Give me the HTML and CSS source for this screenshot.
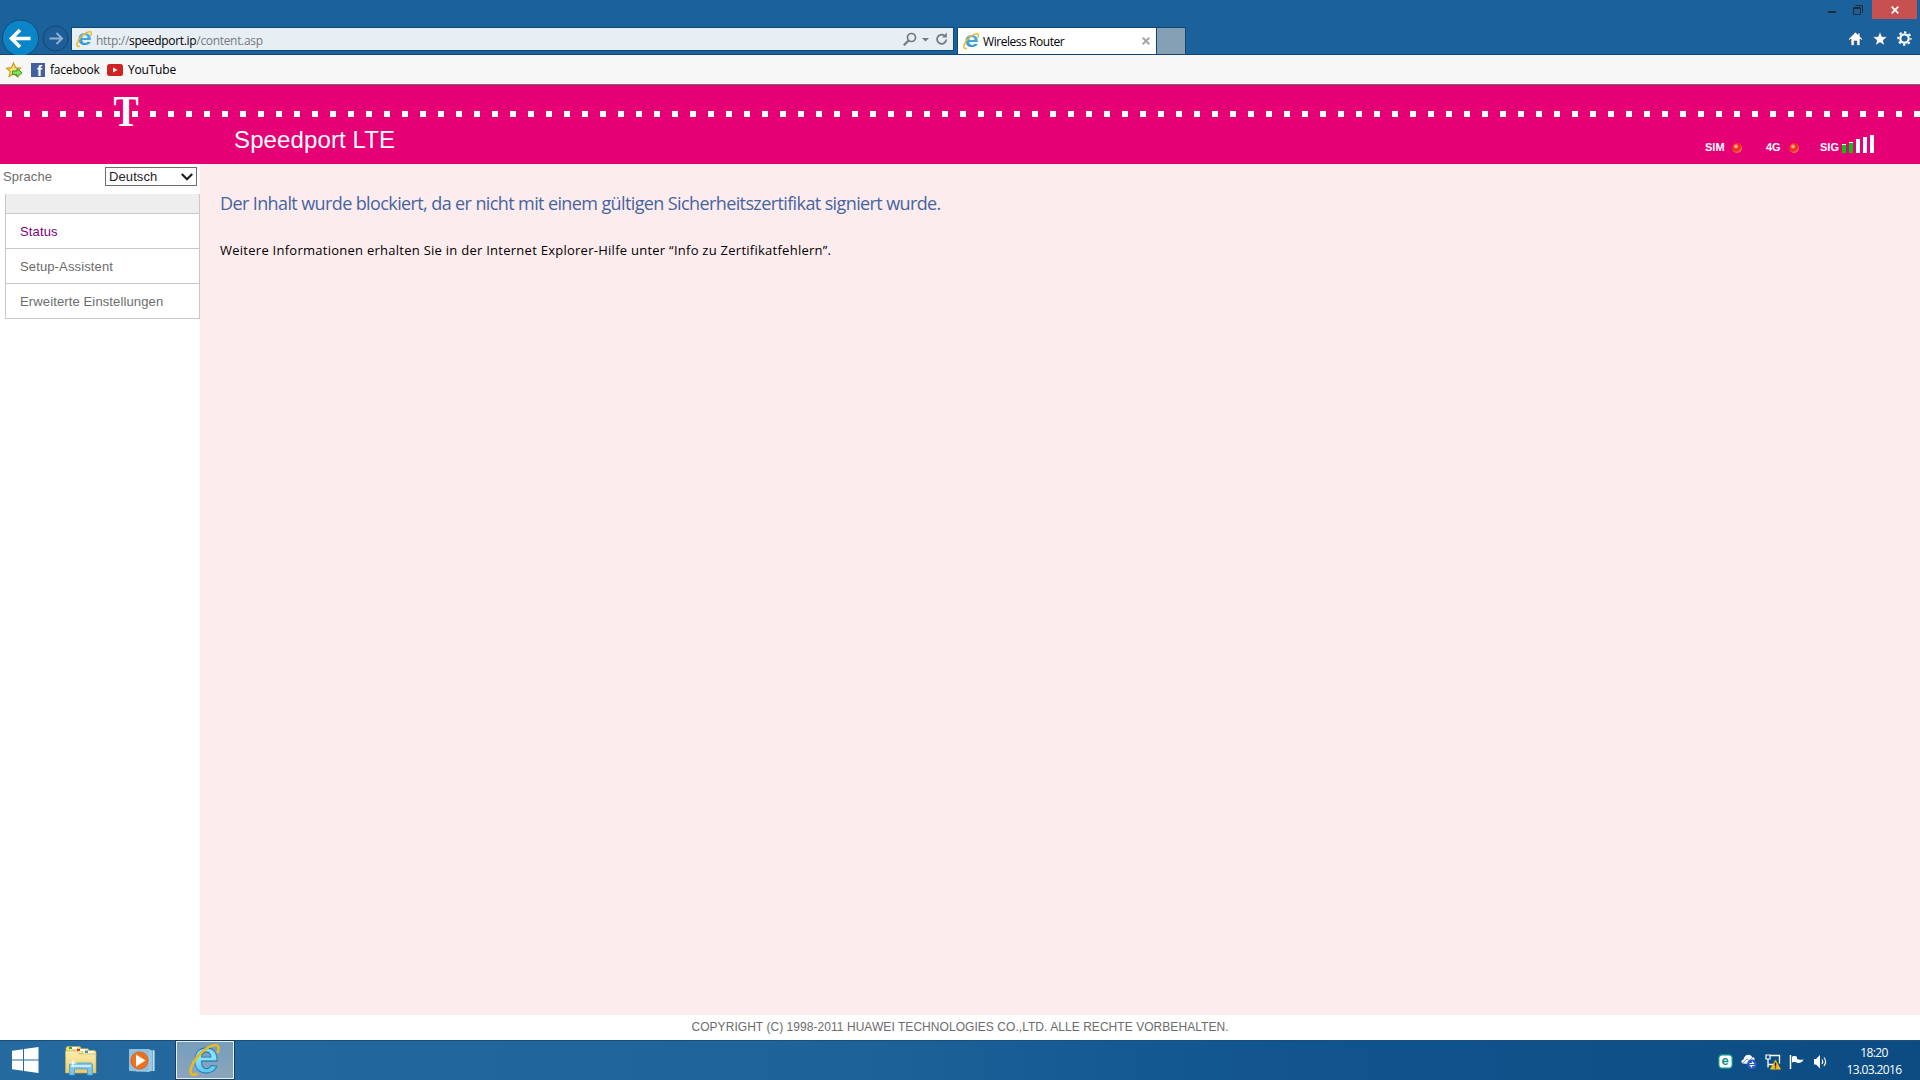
FILE: index.html
```html
<!DOCTYPE html>
<html lang="de">
<head>
    <meta charset="UTF-8">
    <title>Wireless Router</title>
    <link rel="stylesheet" href="styles.css">
</head>
<body>
    <svg class="defs" width="0" height="0">
        <defs>
            <linearGradient id="ieBlue" x1="0" y1="0" x2="0" y2="1">
                <stop offset="0" stop-color="#5fc0ee"/>
                <stop offset="1" stop-color="#2b8fd3"/>
            </linearGradient>
            <linearGradient id="ieCyan" x1="0" y1="0" x2="0" y2="1">
                <stop offset="0" stop-color="#4fc4f0"/>
                <stop offset=".5" stop-color="#8ee6fc"/>
                <stop offset="1" stop-color="#35b3ea"/>
            </linearGradient>
            <linearGradient id="folder" x1="0" y1="0" x2="0" y2="1">
                <stop offset="0" stop-color="#fbeeb0"/>
                <stop offset="1" stop-color="#e9cd6c"/>
            </linearGradient>
            <symbol id="ie" viewBox="0 0 16 16" overflow="visible">
                <text x="1.3" y="14.3" class="ie-letter" transform="scale(1.15 1)">e</text>
                <path d="M3.8 15.2C.6 16.3-.2 13.600 2.200 9.600 5 4.800 10.600.4 14 .7c1.700.2 1.700 2 .8 4" fill="none" stroke="#f3b91b" stroke-width="1.5"/>
            </symbol>
        </defs>
    </svg>

    <header class="browser">
        <div class="titlebar">
            <div class="win-btn minimize"><span></span></div>
            <div class="win-btn">
                <svg width="10" height="10" viewBox="0 0 10 10"><path d="M.5 2.500h7v7h-7zM.5 3.500h7M2.500.5h7v7" fill="none" stroke="#222c36"/></svg>
            </div>
            <div class="win-btn close">
                <svg width="8" height="8" viewBox="0 0 8 8"><path d="M.7.7l6.600 6.600M7.300.7L.7 7.300" stroke="#fff" stroke-width="1.700"/></svg>
            </div>
        </div>
        <div class="navbar">
            <svg class="nav-arrows" width="70" height="35" viewBox="0 0 70 35">
                <circle cx="20" cy="19" r="18" fill="#0a86c8" stroke="#144a77"/>
                <path d="M30 19.500H12M19.500 11L11 19.500l8.500 8.500" fill="none" stroke="#fff" stroke-width="3.600"/>
                <circle cx="55" cy="19.500" r="12.500" fill="#1f5f99" stroke="#15466f"/>
                <path d="M49 19.500h12M56 14l5.500 5.500-5.500 5.500" fill="none" stroke="#8fb0cf" stroke-width="2"/>
            </svg>
            <div class="address">
                <svg class="ie-small" width="16" height="16"><use href="#ie"/></svg>
                <span class="url">http://<b>speedport.ip</b>/content.asp</span>
                <svg width="45" height="15" viewBox="0 0 45 15">
                    <circle cx="8.500" cy="5.500" r="4" fill="none" stroke="#75797d" stroke-width="1.700"/>
                    <path d="M5.600 8.500L.8 13.300" stroke="#75797d" stroke-width="2.200"/>
                    <path d="M19 6h7l-3.500 3.500z" fill="#75797d"/>
                    <path d="M41.300 3.500A4.600 4.600 0 1 0 43.200 7.500" fill="none" stroke="#75797d" stroke-width="1.800"/>
                    <path d="M39 5.500h4.800V.6z" fill="#75797d"/>
                </svg>
            </div>
            <div class="tab">
                <svg class="ie-small" width="16" height="16"><use href="#ie"/></svg>
                <span class="tab-title">Wireless Router</span>
                <svg width="8" height="8" viewBox="0 0 8 8"><path d="M.7.7l6.600 6.600M7.300.7L.7 7.300" stroke="#a6a6a6" stroke-width="2"/></svg>
            </div>
            <div class="new-tab"></div>
            <svg class="tools" width="64" height="16" viewBox="0 0 64 16">
                <g fill="#fff" stroke="#1d4468" stroke-width=".6">
                    <path d="M7.500 1L.5 8l1.200 1.200L3 8v6.500h3.200V10h2.600v4.500H12V8l1.300 1.200L14.500 8 12 5.500V2h-2v1.500z"/>
                    <path d="M32 .5l2 5.100 5.500.2-4.300 3.400 1.500 5.300-4.700-3-4.700 3 1.500-5.300-4.300-3.400 5.500-.2z"/>
                </g>
                <circle cx="56.500" cy="7.500" r="4.200" fill="none" stroke="#fff" stroke-width="2.200"/>
                <circle cx="56.500" cy="7.500" r="6.200" fill="none" stroke="#fff" stroke-width="2" stroke-dasharray="2.400 2.470" stroke-dashoffset="1.200"/>
            </svg>
        </div>
    </header>

    <nav class="favorites">
        <svg width="17" height="16" viewBox="0 0 17 16">
            <path d="M7.500 1l2 4.600 5 .5-3.800 3.400 1.100 5-4.300-2.600-4.400 2.600 1.200-5L.6 6.100l4.900-.5z" fill="#fbe27a" stroke="#d09a1c" stroke-width="1.200"/>
            <path d="M6.500 9h4.500V6.600l5 4.200-5 4.200v-2.400H6.500z" fill="#8fdc5a" stroke="#2c9a25"/>
        </svg>
        <svg class="fb" width="14" height="14" viewBox="0 0 14 14">
            <rect width="14" height="14" fill="#4460a0"/>
            <text x="6" y="13" class="fb-letter">f</text>
        </svg>
        <span class="fav-label fav-facebook">facebook</span>
        <svg width="16" height="12" viewBox="0 0 16 12">
            <rect width="16" height="12" rx="2.500" fill="#cf2322"/>
            <path d="M6 3.500v5L10.500 6z" fill="#fff"/>
        </svg>
        <span class="fav-label">YouTube</span>
    </nav>

    <div class="banner">
        <div class="dots"></div>
        <div class="t-logo"><span>T</span></div>
        <h1 class="product">Speedport LTE</h1>
        <div class="signals">
            <span class="sig-label">SIM</span>
            <span class="led"></span>
            <span class="sig-label label-4g">4G</span>
            <span class="led"></span>
            <span class="sig-label label-sig">SIG</span>
            <svg width="32" height="18" viewBox="0 0 32 18" shape-rendering="crispEdges">
                <path d="M0 9h4v9H0zM7 7h4v11H7zM14 4h4v14h-4zM21 2h4v16h-4zM28 0h4v18h-4z" fill="#fff"/>
                <path d="M0 10h4v8H0zM7 8h4v10H7z" fill="#00c80a"/>
            </svg>
        </div>
    </div>

    <main class="page">
        <aside class="sidebar">
            <div class="language">
                <span>Sprache</span>
                <div class="select">
                    <span>Deutsch</span>
                    <svg width="12" height="8" viewBox="0 0 12 8"><path d="M.8 1L6 6.300 11.200 1" fill="none" stroke="#1e1e1e" stroke-width="2.200"/></svg>
                </div>
            </div>
            <ul class="menu">
                <li class="menu-head"></li>
                <li class="active">Status</li>
                <li>Setup-Assistent</li>
                <li>Erweiterte Einstellungen</li>
            </ul>
        </aside>
        <section class="content">
            <h2>Der Inhalt wurde blockiert, da er nicht mit einem gültigen Sicherheitszertifikat signiert wurde.</h2>
            <p>Weitere Informationen erhalten Sie in der Internet Explorer-Hilfe unter “Info zu Zertifikatfehlern”.</p>
        </section>
    </main>

    <footer class="copyright">COPYRIGHT (C) 1998-2011 HUAWEI TECHNOLOGIES CO.,LTD. ALLE RECHTE VORBEHALTEN.</footer>

    <div class="taskbar">
        <svg class="start" width="27" height="26" viewBox="0 0 27 26">
            <path d="M0 3.800L11 2.200v10.300H0zM12 2L26.500 0v12.500H12zM0 13.500h11v10.300L0 22.200zM12 13.500h14.500V26L12 24z" fill="#fff"/>
        </svg>
        <svg class="explorer" width="32" height="30" viewBox="0 0 32 30">
            <path d="M1 2l1-1.500h13l1 1.500v4h-15z" fill="#f2dc8c" stroke="#c9a94d" stroke-width=".6"/>
            <path d="M9 4l1-1.300h13l1 1.300v4H9z" fill="#f6e3a0" stroke="#c9a94d" stroke-width=".6"/>
            <path d="M17 6l1-1.500h12L31 6v4H17z" fill="#f8e9ae" stroke="#c9a94d" stroke-width=".6"/>
            <path d="M6 1h6v2H6zM14 3h6v2h-6zM22 5h6v2h-6z" fill="#fff"/>
            <path d="M4 1h3v2H4z" fill="#14b830"/>
            <path d="M12 3h3v2h-3z" fill="#d53c28"/>
            <path d="M20 5h3v2h-3z" fill="#2c9ae0"/>
            <path d="M.5 5H12l2 3h17v19H.5z" fill="url(#folder)" stroke="#cdae52" stroke-width=".6"/>
            <path d="M4.500 29V19q0-2 2-2h19q2 0 2 2v10h-5v-6h-13v6z" fill="#7fc3e6" stroke="#4a9bc8" stroke-width=".8"/>
            <path d="M6 20h20" stroke="#c9ecfb" stroke-width="2"/>
            <path d="M8 12l.7 4.300 4.300.7-4.300.7L8 22l-.7-4.300L3 17l4.300-.7z" fill="#fff"/>
        </svg>
        <svg class="media" width="27" height="26" viewBox="0 0 27 26">
            <path d="M7 2l19 .5V23l-19 .5z" fill="#78b2d8"/>
            <path d="M22 2v21M24.500 2v21" stroke="#b9dcef"/>
            <path d="M.5 1.500h20v22l-20-1z" fill="#8fc1df" stroke="#b0d5ea" stroke-width=".7"/>
            <circle cx="10.500" cy="12.500" r="8.600" fill="#f1701c" stroke="#d9560c" stroke-width=".8"/>
            <path d="M7 6.500v12l9.500-6z" fill="#fff"/>
        </svg>
        <div class="task-active">
            <svg width="32" height="32" viewBox="0 0 32 32">
                <text x="4" y="29" class="ie-big">e</text>
                <path d="M8.500 29.500C2.500 32.500-.5 29.500 3 21.500 7 12.500 18 1.200 26.500 1.200c4 0 3.500 4.300 2 7.800" fill="none" stroke="#e8ba1c" stroke-width="2.600"/>
            </svg>
        </div>
        <div class="tray">
            <svg width="15" height="15" viewBox="0 0 15 15">
                <rect x=".7" y=".7" width="13.600" height="13.600" rx="3.500" fill="#fff" stroke="#0d8f8c" stroke-width="1.400"/>
                <text x="3.600" y="11" class="eset">e</text>
            </svg>
            <svg width="16" height="16" viewBox="0 0 16 16">
                <path d="M2 9.500C-.5 8.500 0 6 2.500 5.500 3 2.500 5 .8 7.500.8c2 0 3 1 3.500 2.200 2-.2 3 1 2.500 3L9 10z" fill="#f5f8fa"/>
                <path d="M2 9l4-4 2 2 4-4" stroke="#8596a5" stroke-width=".9" fill="none"/>
                <circle cx="11" cy="10.500" r="5" fill="#2358c4"/>
                <path d="M8.500 9.500h4l-1.500-2M13.500 11.500h-4l1.500 2" fill="none" stroke="#fff" stroke-width="1.200"/>
            </svg>
            <svg width="16" height="16" viewBox="0 0 16 16">
                <path d="M5 1.500h9.500v8M3 5v5.500h5M3 10.500v3" fill="none" stroke="#fff" stroke-width="1.300"/>
                <path d="M1 1h4v4H1z" fill="#0e518b" stroke="#fff" stroke-width="1.200"/>
                <path d="M10.500 5.500L16 15.500H5z" fill="#f6be16"/>
                <path d="M10.500 8.500v4M10.500 13.300v1.200" stroke="#222" stroke-width="1.400"/>
            </svg>
            <svg width="16" height="16" viewBox="0 0 16 16">
                <path d="M1.500 1v14" stroke="#fff" stroke-width="1.500"/>
                <path d="M3 2.500c2-1 4-.5 5 .5v2c2 1 4 .7 6.500.5-1 2.500-3 4-6 3.500-1.500-1.200-3-1.200-5.500-.5z" fill="#fff"/>
            </svg>
            <svg width="16" height="16" viewBox="0 0 16 16">
                <path d="M1 5h2l4-4v13.500l-4-4H1z" fill="#fff"/>
                <path d="M9 5.500q1.500 2 0 4.500M11 3.500q3.200 4 0 8.500" fill="none" stroke="#fff" stroke-width="1.200"/>
            </svg>
        </div>
        <div class="clock">
            <span>18:20</span>
            <span>13.03.2016</span>
        </div>
    </div>
</body>
</html>
```

FILE: styles.css
```css
:root {
    --chrome: #1b619c;
    --edge: #134572;
    --magenta: #e50075;
    --grey: #6c6c6c;
    --line: #c8c8c8;
}

* {
    box-sizing: border-box;
}

body {
    margin: 0;
    width: 1920px;
    height: 1080px;
    display: flex;
    flex-direction: column;
    overflow: hidden;
    background: #fff;
    font-family: "Open Sans", "Noto Sans", sans-serif;
    font-size: 12px;
    white-space: nowrap;
}

svg {
    display: block;
    flex: none;
    overflow: visible;
}

.defs {
    position: absolute;
}

.ie-letter {
    font: bold 22px "Liberation Sans", sans-serif;
    fill: url(#ieBlue);
}

/* browser frame */
.browser {
    height: 55px;
    background: var(--chrome);
    border-bottom: 1px solid var(--edge);
}

.titlebar {
    height: 19px;
    display: flex;
    justify-content: flex-end;
    padding-right: 3px;
}

.win-btn {
    width: 26px;
    height: 19px;
    display: flex;
    align-items: center;
    justify-content: center;
}

.minimize {
    width: 27px;
    padding-top: 5px;
}

.minimize span {
    width: 8px;
    height: 2px;
    background: #222c36;
}

.close {
    width: 45px;
    margin-left: 1px;
    background: #c75050;
}

.navbar {
    height: 35px;
    display: flex;
    align-items: flex-start;
}

.nav-arrows {
    width: 71px;
    flex: none;
}

.address {
    width: 883px;
    height: 24px;
    margin-top: 8px;
    padding: 0 5px 0 4px;
    display: flex;
    align-items: center;
    background: #e7eff5;
    border: 1px solid var(--edge);
}

.url {
    flex: 1;
    margin: 2px 0 0 4px;
    color: #76797c;
    letter-spacing: -.32px;
}

.url b {
    color: #000;
    font-weight: 400;
}

.tab {
    width: 200px;
    height: 27px;
    margin: 8px 0 0 3px;
    padding: 0 6px 0 5px;
    display: flex;
    align-items: center;
    background: #fff;
    border: 1px solid var(--edge);
    border-bottom: 0;
}

.tab-title {
    flex: 1;
    margin: 1px 0 0 4px;
    letter-spacing: -.45px;
}

.new-tab {
    width: 29px;
    height: 27px;
    margin-top: 8px;
    background: #859fb5;
    border: 1px solid var(--edge);
    border-width: 1px 1px 0 0;
}

.tools {
    margin: 12px 8px 0 auto;
}

.favorites {
    height: 30px;
    padding: 0 6px;
    display: flex;
    align-items: center;
    background: #f7f7f7;
    border-bottom: 1px solid #6e6e6e;
}

.fb {
    margin-left: 8px;
}

.fb-letter {
    font: bold 15px "Liberation Sans", sans-serif;
    fill: #fff;
}

.fav-label {
    margin-left: 5px;
    letter-spacing: -.2px;
}

.fav-facebook {
    width: 52px;
    margin-right: 5px;
}

/* router page header */
.banner {
    position: relative;
    height: 79px;
    background: var(--magenta);
    color: #fff;
    font-family: "Liberation Sans", Arial, sans-serif;
    display: flex;
    justify-content: space-between;
    align-items: flex-end;
}

.dots {
    position: absolute;
    top: 26px;
    left: 6px;
    right: 0;
    height: 6px;
    background: repeating-linear-gradient(to right, #fff 0 6px, transparent 6px 18px);
}

.t-logo {
    position: absolute;
    left: 114px;
    top: 11px;
    width: 24px;
    height: 30px;
    display: flex;
    justify-content: center;
    font: bold 45px/30px "Liberation Serif", serif;
}

.t-logo span {
    transform: scaleX(.84);
}

.product {
    margin: 0 0 10px 234px;
    font-size: 24px;
    font-weight: 400;
    line-height: 28px;
    letter-spacing: .12px;
}

.signals {
    display: flex;
    align-items: flex-end;
    margin: 0 46px 11px 0;
}

.sig-label {
    font-size: 11px;
    font-weight: bold;
    line-height: 12px;
    width: 27px;
}

.label-4g {
    width: 23px;
    margin-left: 24px;
}

.label-sig {
    width: 22px;
    margin-left: 21px;
}

.led {
    width: 10px;
    height: 10px;
    border-radius: 50%;
    background: radial-gradient(circle at 40% 35%, #f8c4b4 0 8%, #ff2a12 30%, #f0301c 50%, #f5b29c 90%);
}

/* page body */
.page {
    height: 851px;
    display: flex;
}

.sidebar {
    width: 200px;
    font-family: "Liberation Sans", Arial, sans-serif;
    font-size: 13px;
    color: var(--grey);
}

.language {
    height: 30px;
    padding: 3px 3px 0 3px;
    display: flex;
    justify-content: space-between;
    line-height: 19px;
    letter-spacing: .1px;
}

.select {
    width: 92px;
    height: 19px;
    padding: 0 3px;
    display: flex;
    align-items: center;
    justify-content: space-between;
    border: 1px solid #6d6d6d;
    color: #1e1e1e;
}

.menu {
    margin: 0 0 0 5px;
    padding: 0;
    list-style: none;
    border: 1px solid var(--line);
    border-width: 0 1px;
    letter-spacing: .13px;
}

.menu li {
    height: 35px;
    padding-left: 14px;
    line-height: 35px;
    border-bottom: 1px solid var(--line);
}

.menu .menu-head {
    height: 20px;
    background: #eee;
}

.menu .active {
    color: #800080;
}

.content {
    flex: 1;
    padding: 26px 20px;
    background: #fdecee;
}

.content h2 {
    margin: 0;
    color: #4465a2;
    font-size: 18px;
    font-weight: 400;
    line-height: 26px;
    letter-spacing: -.61px;
}

.content p {
    margin: 24px 0 0;
    color: #000;
    font-size: 13px;
    line-height: 20px;
    letter-spacing: .26px;
}

.copyright {
    height: 25px;
    text-align: center;
    color: var(--grey);
    font: 12px/25px "Liberation Sans", Arial, sans-serif;
    letter-spacing: .05px;
}

/* desktop taskbar */
.taskbar {
    height: 40px;
    display: flex;
    background: linear-gradient(to right, #256a9f, #1d6299 45%, #12558f 65%, #0c4c82);
    border-top: 1px solid #1b4e79;
    color: #fff;
}

.start {
    margin: 6px 0 0 12px;
}

.explorer {
    margin: 5px 0 0 26px;
}

.media {
    margin: 7px 0 0 32px;
}

.task-active {
    width: 60px;
    height: 40px;
    margin: -1px 0 0 19px;
    display: flex;
    align-items: center;
    justify-content: center;
    background: linear-gradient(#759dbd, #8ba6bd);
    border: 1px solid #163e61;
    box-shadow: inset 0 0 0 1px #e7eef4;
}

.ie-big {
    font: bold 46px "Liberation Sans", sans-serif;
    fill: url(#ieCyan);
    stroke: #1a6fae;
    stroke-width: .8px;
}

.tray {
    margin: 13px 0 0 auto;
    display: flex;
    gap: 8px;
}

.eset {
    font: bold 13px "Liberation Sans", sans-serif;
    fill: #0d8f8c;
}

.clock {
    width: 56px;
    margin: 3px 18px 0 17px;
    display: flex;
    flex-direction: column;
    align-items: center;
    line-height: 17px;
    letter-spacing: -.6px;
}
```
